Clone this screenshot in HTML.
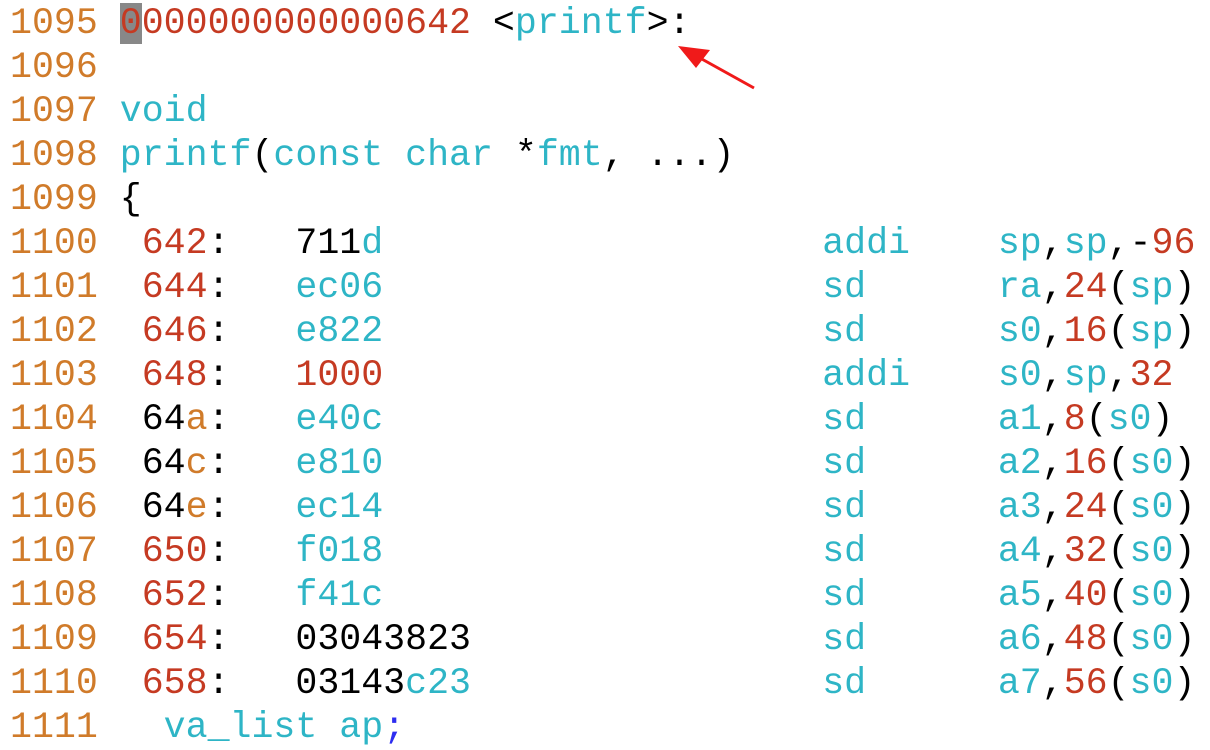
<!DOCTYPE html>
<html><head><meta charset="utf-8"><style>
html,body{margin:0;padding:0;background:#fff;width:1210px;height:750px;overflow:hidden}
pre{margin:0;position:absolute;left:10px;top:2px;font-family:"Liberation Mono",monospace;font-size:36.6px;line-height:44px;color:#000}
.n{color:#d07b2a}.r{color:#c53a22}.c{color:#2eb5c6}.b{color:#2d2df0}
.cur{background:#888}
</style></head><body>
<pre><span class="n">1095</span> <span class="r"><span class="cur">0</span>000000000000642</span> &lt;<span class="c">printf</span>&gt;:
<span class="n">1096</span>
<span class="n">1097</span> <span class="c">void</span>
<span class="n">1098</span> <span class="c">printf</span>(<span class="c">const char</span> *<span class="c">fmt</span>, ...)
<span class="n">1099</span> {
<span class="n">1100</span>  <span class="r">642</span>:   711<span class="c">d</span>                    <span class="c">addi</span>    <span class="c">sp</span>,<span class="c">sp</span>,-<span class="r">96</span>
<span class="n">1101</span>  <span class="r">644</span>:   <span class="c">ec06</span>                    <span class="c">sd</span>      <span class="c">ra</span>,<span class="r">24</span>(<span class="c">sp</span>)
<span class="n">1102</span>  <span class="r">646</span>:   <span class="c">e822</span>                    <span class="c">sd</span>      <span class="c">s0</span>,<span class="r">16</span>(<span class="c">sp</span>)
<span class="n">1103</span>  <span class="r">648</span>:   <span class="r">1000</span>                    <span class="c">addi</span>    <span class="c">s0</span>,<span class="c">sp</span>,<span class="r">32</span>
<span class="n">1104</span>  64<span class="n">a</span>:   <span class="c">e40c</span>                    <span class="c">sd</span>      <span class="c">a1</span>,<span class="r">8</span>(<span class="c">s0</span>)
<span class="n">1105</span>  64<span class="n">c</span>:   <span class="c">e810</span>                    <span class="c">sd</span>      <span class="c">a2</span>,<span class="r">16</span>(<span class="c">s0</span>)
<span class="n">1106</span>  64<span class="n">e</span>:   <span class="c">ec14</span>                    <span class="c">sd</span>      <span class="c">a3</span>,<span class="r">24</span>(<span class="c">s0</span>)
<span class="n">1107</span>  <span class="r">650</span>:   <span class="c">f018</span>                    <span class="c">sd</span>      <span class="c">a4</span>,<span class="r">32</span>(<span class="c">s0</span>)
<span class="n">1108</span>  <span class="r">652</span>:   <span class="c">f41c</span>                    <span class="c">sd</span>      <span class="c">a5</span>,<span class="r">40</span>(<span class="c">s0</span>)
<span class="n">1109</span>  <span class="r">654</span>:   03043823                <span class="c">sd</span>      <span class="c">a6</span>,<span class="r">48</span>(<span class="c">s0</span>)
<span class="n">1110</span>  <span class="r">658</span>:   03143<span class="c">c23</span>                <span class="c">sd</span>      <span class="c">a7</span>,<span class="r">56</span>(<span class="c">s0</span>)
<span class="n">1111</span>   <span class="c">va_list ap</span><span class="b">;</span></pre>
<svg width="1210" height="750" style="position:absolute;left:0;top:0">
<line x1="754" y1="88" x2="700" y2="58" stroke="#f01a1a" stroke-width="3"/>
<polygon points="678,46 710,50 696,68" fill="#f01a1a"/>
</svg>
</body></html>
